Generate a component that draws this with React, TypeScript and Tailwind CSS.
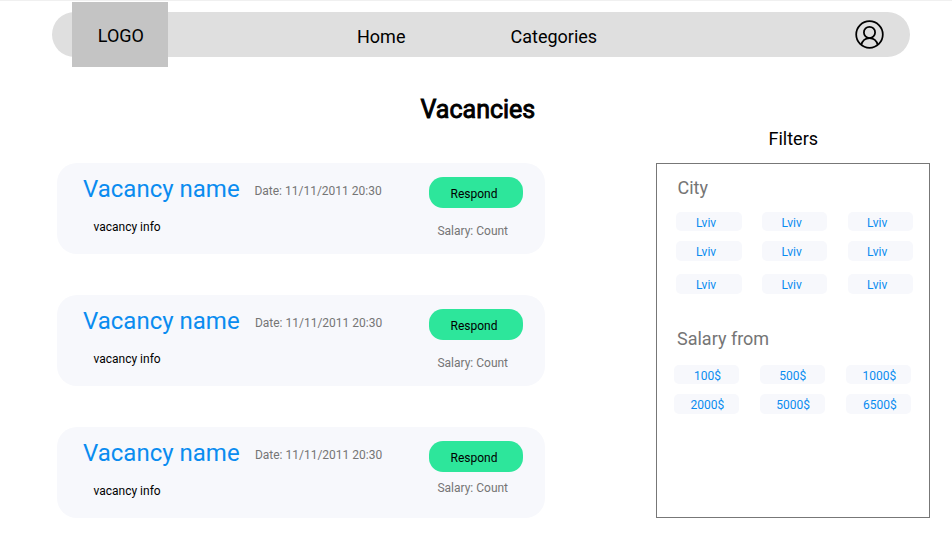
const vacancies = [
  { date: "pl-[15.4px]", salary: "mt-[14.4px]" },
  { date: "pl-[15.9px]", salary: "mt-[14.5px]" },
  { date: "pl-[15.9px]", salary: "mt-[8px]" },
];

const cityRows = ["h-[29.3px]", "h-[33px]", "h-[20.2px]"];

const salaries = [
  { label: "100$", pad: "pl-[20px]" },
  { label: "500$", pad: "pl-[19.5px]" },
  { label: "1000$", pad: "pl-[17px]" },
  { label: "2000$", pad: "pl-[16.5px]" },
  { label: "5000$", pad: "pl-[16.5px]" },
  { label: "6500$", pad: "pl-[17.5px]" },
];

function UserIcon() {
  return (
    <svg className="h-[29px] w-[29px]" viewBox="0 0 29 29" fill="none" stroke="#000" strokeWidth="1.75">
      <circle cx="14.5" cy="14.5" r="13.3" />
      <circle cx="14.5" cy="12.4" r="5.6" />
      <path d="M6.3 24.9C7.3 20.7 10.4 18 14.5 18S21.7 20.7 22.7 24.9" />
    </svg>
  );
}

function Chip({ label, pad }: { label: string; pad: string }) {
  return (
    <button className={`flex h-[19.5px] w-[65.3px] rounded-[5px] bg-[#f7f8fc] text-left text-[12px] leading-[22px] text-[#0a8cf0] ${pad}`}>
      {label}
    </button>
  );
}

function VacancyCard({ date, salary }: { date: string; salary: string }) {
  return (
    <article className="flex h-[90.7px] w-[488.5px] rounded-[20px] bg-[#f7f8fc] pl-[26.5px]">
      <div className="w-[346px] pt-[10px]">
        <div className="flex whitespace-nowrap">
          <h2 className="h-[30px] w-[156px] text-[24px] leading-[32px] text-[#0a8cf0]">Vacancy name</h2>
          <p className={`h-[36px] text-[12px] leading-[36px] text-[#757575] ${date}`}>Date: 11/11/2011 20:30</p>
        </div>
        <p className="pl-[10.5px] pt-[10px] text-[12px] leading-[16px] text-black">vacancy info</p>
      </div>
      <div className="w-[94px] pt-[14px]">
        <button className="block h-[31.5px] w-[94px] rounded-[14px] bg-[#2de69b] pl-[21.5px] text-left text-[12px] leading-[34px] text-black">
          Respond
        </button>
        <p className={`pl-[8.4px] text-[12px] leading-[16px] text-[#757575] ${salary}`}>Salary: Count</p>
      </div>
    </article>
  );
}

export default function App() {
  return (
    <div className="h-[539px] w-[952px] overflow-hidden border-t border-[#f0f0f0] bg-white font-['Roboto',sans-serif] text-black">
      <header className="ml-[51.5px] mt-[11px] flex h-[45.4px] w-[858.9px] items-center rounded-full bg-[#dfdfdf] pl-[20.9px] text-[18px] leading-[20px]">
        <div className="flex h-[65.5px] w-[96px] shrink-0 items-center justify-center bg-[#c4c4c4] pl-px pt-[3.5px]">LOGO</div>
        <nav className="flex pt-[4px]">
          <a className="ml-[188.6px] w-[153.5px]">Home</a>
          <a className="w-[344.6px]">Categories</a>
        </nav>
        <UserIcon />
      </header>
      <h1 className="ml-[420.5px] mt-[37.6px] h-[29.5px] text-[25px] leading-[30px] [-webkit-text-stroke:0.9px_#000]">Vacancies</h1>
      <div className="flex">
        <main className="ml-[56.5px] mt-[38.5px] flex w-[599.5px] flex-col gap-[41.3px]">
          {vacancies.map((v, i) => (
            <VacancyCard key={i} {...v} />
          ))}
        </main>
        <aside className="mt-[4.5px] w-[274px]">
          <h2 className="pl-[112.5px] text-[18px] leading-[20px]">Filters</h2>
          <section className="mt-[14px] h-[355px] border border-[#777777] pl-[17px] pt-[14px]">
            <h3 className="pl-[3.5px] text-[18px] leading-[20px] text-[#757575]">City</h3>
            <div className="pl-[2.4px] pt-[14px]">
              {cityRows.map((height) => (
                <div key={height} className={`flex gap-[20.3px] ${height}`}>
                  <Chip label="Lviv" pad="pl-[19.5px]" />
                  <Chip label="Lviv" pad="pl-[19.5px]" />
                  <Chip label="Lviv" pad="pl-[19.5px]" />
                </div>
              ))}
            </div>
            <h3 className="pl-[3px] pt-[34.5px] text-[18px] leading-[20px] text-[#757575]">Salary from</h3>
            <div className="grid w-[237px] grid-cols-3 gap-x-[20.3px] gap-y-[9.7px] pt-[16px]">
              {salaries.map((s) => (
                <Chip key={s.label} {...s} />
              ))}
            </div>
          </section>
        </aside>
      </div>
    </div>
  );
}
